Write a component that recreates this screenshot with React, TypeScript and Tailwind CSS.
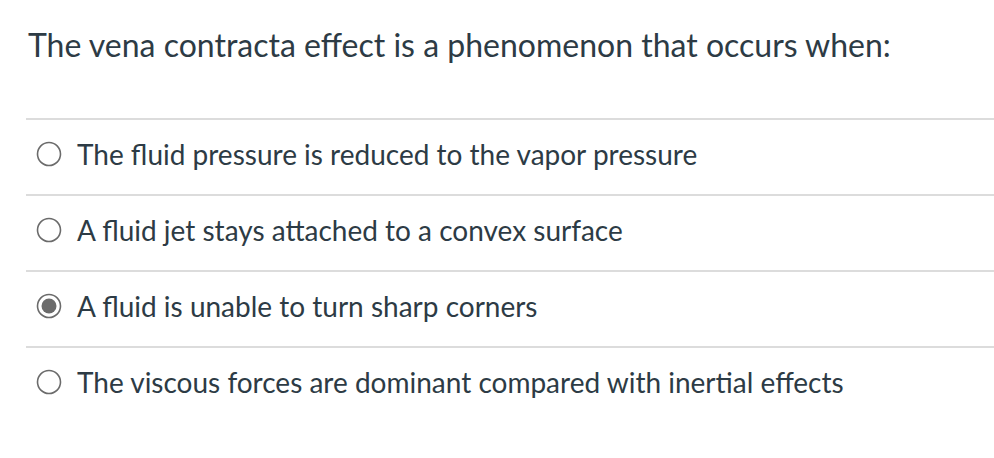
import React from "react";

const options = [
  { text: "The fluid pressure is reduced to the vapor pressure", checked: false },
  { text: "A fluid jet stays attached to a convex surface", checked: false },
  { text: "A fluid is unable to turn sharp corners", checked: true },
  { text: "The viscous forces are dominant compared with inertial effects", checked: false },
];

function Radio({ checked }: { checked: boolean }) {
  return (
    <svg width="26" height="26" viewBox="0 0 26 26" className="shrink-0">
      <circle cx="13" cy="13" r="11.5" fill="white" stroke="#6b6b6b" strokeWidth="1.6" />
      {checked && <circle cx="13" cy="13" r="7.5" fill="#6b6b6b" />}
    </svg>
  );
}

export default function App() {
  return (
    <div
      className="w-[994px] h-[458px] bg-white text-[#2d3b45] overflow-hidden"
      style={{ fontFamily: "Lato, 'Open Sans', sans-serif" }}
    >
      <div className="pl-[26px]">
        <div className="pt-[25px] h-[118px] pl-[2px] text-[32px] leading-[40px]">
          The vena contracta effect is a phenomenon that occurs when:
        </div>
        {options.map((o, i) => (
          <div
            key={i}
            className="h-[76px] border-t-2 border-[#dcdcdc] flex items-center pl-[10px] gap-[15px] pb-[6px]"
          >
            <Radio checked={o.checked} />
            <span className="text-[28px] leading-[34px]">{o.text}</span>
          </div>
        ))}
      </div>
    </div>
  );
}
